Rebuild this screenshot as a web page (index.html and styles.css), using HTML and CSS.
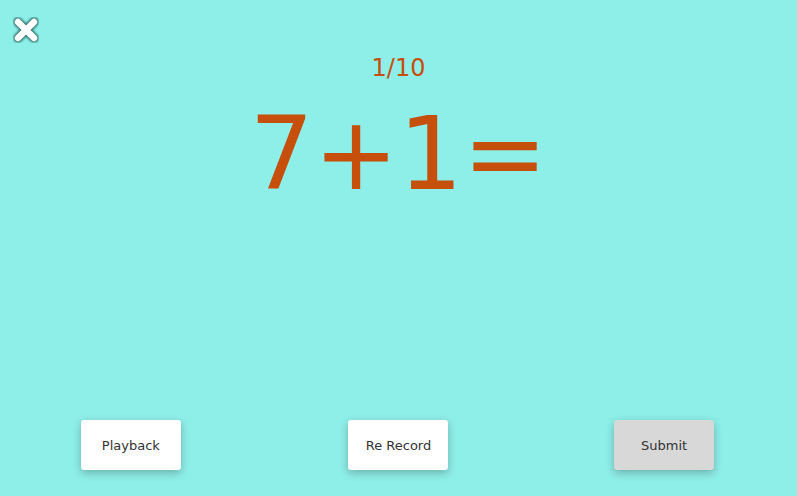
FILE: index.html
```html
<!DOCTYPE html>
<html>
<head>
<meta charset="utf-8">
<link rel="stylesheet" href="styles.css">
</head>
<body>
<div class="page">
  <div class="topbar">
    <button class="close" aria-label="Close">
      <svg width="30" height="30" viewBox="0 0 30 30">
        <defs>
          <filter id="sh" x="-30%" y="-30%" width="160%" height="160%">
            <feGaussianBlur stdDeviation="1"/>
          </filter>
        </defs>
        <path d="M7 7 L23 23 M23 7 L7 23" stroke="#0f3f3c" stroke-width="9.5" stroke-linecap="round" fill="none" opacity="0.7" filter="url(#sh)"/>
        <path d="M7 7 L23 23 M23 7 L7 23" stroke="#ffffff" stroke-width="6.5" stroke-linecap="round" fill="none"/>
      </svg>
    </button>
  </div>
  <div class="question">
    <div class="counter">1/10</div>
    <div class="equation">7+1=</div>
  </div>
  <div class="actions">
    <div class="cell"><button class="btn btn-first">Playback</button></div>
    <div class="cell"><button class="btn">Re Record</button></div>
    <div class="cell"><button class="btn btn-submit">Submit</button></div>
  </div>
</div>
</body>
</html>
```

FILE: styles.css
```css
* { box-sizing: border-box; }
html, body {
  margin: 0;
  padding: 0;
  height: 100%;
}
body {
  background: #8eeee8;
  font-family: "DejaVu Sans", sans-serif;
}
.page {
  height: 100vh;
  display: flex;
  flex-direction: column;
}
.topbar {
  height: 48px;
  padding: 15px 0 0 11px;
}
.close {
  width: 30px;
  height: 30px;
  padding: 0;
  border: 0;
  background: transparent;
  display: block;
}
.question {
  display: flex;
  flex-direction: column;
  align-items: center;
  color: #c64f0c;
  padding-top: 6px;
}
.counter {
  font-size: 24px;
  line-height: 28px;
}
.equation {
  font-size: 101px;
  line-height: 110px;
  margin-top: 17px;
}
.actions {
  margin-top: auto;
  display: grid;
  grid-template-columns: 1fr 1fr 1fr;
  padding-bottom: 26px;
}
.cell {
  display: flex;
  justify-content: center;
}
.btn {
  width: 100px;
  height: 50px;
  border: 0;
  border-radius: 3px;
  background: #ffffff;
  color: #333333;
  font-family: "DejaVu Sans", sans-serif;
  font-size: 13px;
  box-shadow: 0 3px 8px rgba(0, 0, 0, 0.25);
}
.btn-first {
  margin-right: 4px;
}
.btn-submit {
  background: #d8d8d8;
}
```
